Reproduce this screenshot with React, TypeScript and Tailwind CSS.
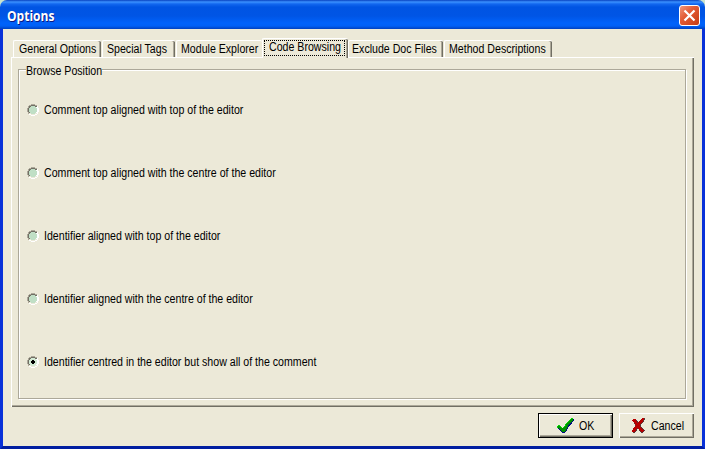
import React from "react";

const raised =
  "shadow-[inset_1px_1px_0_#fff,inset_-1px_-1px_0_#716f64,inset_-2px_-2px_0_#aca899]";

const narrow = "inline-block origin-left scale-x-[0.884] whitespace-nowrap";

function Pixels({ rows, colors }: { rows: string[]; colors: Record<string, string> }) {
  const width = Math.max(...rows.map((r) => r.length));
  return (
    <svg width={width} height={rows.length} shapeRendering="crispEdges" className="block shrink-0">
      {rows.flatMap((row, y) =>
        [...row].map((c, x) =>
          colors[c] ? <rect key={`${x}-${y}`} x={x} y={y} width="1" height="1" fill={colors[c]} /> : null,
        ),
      )}
    </svg>
  );
}

const radioRows = [
  "....gggg....",
  "..ggddddgg..",
  ".gddffffddw.",
  ".gdffffffww.",
  "gdffffffffww",
  "gdffffffffww",
  "gdffffffffww",
  "gdffffffffww",
  ".gdffffffww.",
  ".gllffffllw.",
  "..wwllllww..",
  "....wwww....",
];

const radioCheckedRows = [
  "....gggg....",
  "..ggddddgg..",
  ".gddffffddw.",
  ".gdffffffww.",
  "gdfffkkfffww",
  "gdffkkkkffww",
  "gdffkkkkffww",
  "gdfffkkfffww",
  ".gdffffffww.",
  ".gllffffllw.",
  "..wwllllww..",
  "....wwww....",
];

const checkRows = [
  "..............bb.",
  ".............bggn",
  "............bgggn",
  "...........bgggn.",
  "..........bgggn..",
  ".........bgggnn..",
  "........bgggnn...",
  ".bb.....bggnn....",
  "bggb...bgggn.....",
  "bgggb.bgggn......",
  ".nggggggggn......",
  "..nggggggn.......",
  "...ngggggn.......",
  "....ngggn........",
  ".....nnn.........",
];

const crossRows = [
  "..........rrs",
  ".rrr.....rrrs",
  "rrrrs...rrrs.",
  ".rrrrs.rrrrs.",
  "..rrrsrrrrs..",
  "..srrrrrrs...",
  "...rrrrrs....",
  "...srrrrs....",
  "...rrrrrs....",
  "..rrrrrrrs...",
  ".rrrrsrrrrs..",
  ".rrrs..rrrrs.",
  "rrrrs..srrrrs",
  "rrrs....srrs.",
  ".ss......ss..",
];

const edge = "shadow-[inset_-1px_0_0_#716f64,inset_-2px_0_0_#aca899]";

const tabs = [
  { label: "General Options", box: `w-[88px] pl-[5px] ${edge}` },
  { label: "Special Tags", box: `w-[73px] ml-px pl-[4px] ${edge}` },
  { label: "Module Explorer", box: "w-[86px] ml-px pl-[4px]" },
  { label: "Code Browsing", active: true, box: `w-[86px] pl-[6px] ${edge}` },
  { label: "Exclude Doc Files", box: `w-[95px] pl-[3px] ${edge}` },
  { label: "Method Descriptions", box: `w-[108px] ml-px pl-[4px] ${edge}` },
];

const options = [
  { label: "Comment top aligned with top of the editor" },
  { label: "Comment top aligned with the centre of the editor" },
  { label: "Identifier aligned with top of the editor" },
  { label: "Identifier aligned with the centre of the editor" },
  { label: "Identifier centred in the editor but show all of the comment", checked: true },
];

export default function App() {
  return (
    <div className="flex h-[449px] w-[705px] flex-col overflow-hidden bg-[#c9e3cd] font-['Liberation_Sans',Arial,sans-serif] text-[12px] leading-[14px] text-black">
      <header className="flex h-[29px] shrink-0 items-start justify-between rounded-t-[7px] bg-[linear-gradient(180deg,#0842c0_0px,#3b91ff_2px,#1267ef_4px,#0054e3_7px,#0055e5_16px,#0062fb_23px,#0060f6_26px,#0040bf_29px)] pt-[5px] pr-[5px] pl-[7px]">
        <h1 className="origin-left scale-x-[0.86] pt-[3px] font-['Open_Sans',sans-serif] text-[14px] leading-[16px] font-bold text-white [text-shadow:1px_1px_0_#0a1883]">
          Options
        </h1>
        <button aria-label="Close" className="flex h-[21px] w-[21px] items-center justify-center rounded-[3px] border border-white bg-[linear-gradient(135deg,#ef967c,#e35c36_40%,#c63c12)]">
          <svg width="13" height="13" viewBox="0 0 13 13" className="shrink-0">
            <path d="M1.500 1.500l10 10M11.500 1.500l-10 10" stroke="#fff" strokeWidth="2.2" />
          </svg>
        </button>
      </header>
      <main className="flex flex-1 flex-col border-x-[3px] border-b-[3px] border-[#0831d9] border-b-[#001ea0] bg-[#ece9d8] px-[8px]">
        <nav className="z-10 flex h-[28px] shrink-0 items-end pl-[2px]">
          {tabs.map((t) => (
            <div
              key={t.label}
              className={`shrink-0 rounded-t-[2px] border-t border-l border-white bg-[#ece9d8] pt-px ${t.box} ${
                t.active ? "relative -mb-px h-[20px]" : "h-[17px]"
              }`}
            >
              <span className={narrow}>{t.label}</span>
              {t.active && <span className="absolute top-[1px] left-[1px] h-[16px] w-[81px] border border-dotted border-black" />}
            </div>
          ))}
        </nav>
        <section className={`h-[350px] w-[683px] shrink-0 pt-[12px] pl-[7px] ${raised}`}>
          <div className="h-[330px] w-[668px] border border-[#aca899] pl-[7px] shadow-[1px_1px_0_#fff,inset_1px_1px_0_#fff]">
            <div className="-mt-[6px] h-[14px] w-[76px] bg-[#ece9d8]">
              <span className={narrow}>Browse Position</span>
            </div>
            <div className="flex flex-col gap-[49px] pt-[25px] pl-px">
              {options.map((o) => (
                <label key={o.label} className="flex h-[14px] items-center gap-[5px]">
                  <Pixels
                    rows={o.checked ? radioCheckedRows : radioRows}
                    colors={{ g: "#aca899", d: "#716f64", f: o.checked ? "#d3ead4" : "#c0dfc5", l: "#ece9d8", w: "#fff", k: "#000" }}
                  />
                  <span className={narrow}>{o.label}</span>
                </label>
              ))}
            </div>
          </div>
        </section>
        <footer className="flex justify-end gap-[6px] pt-[6px]">
          <button className={`h-[25px] w-[75px] border border-black ${raised}`}>
            <span className="flex items-center pl-[18px]">
              <Pixels rows={checkRows} colors={{ b: "#00d800", g: "#009000", n: "#000c80" }} />
              <span className={`ml-[5px] ${narrow}`}>OK</span>
            </span>
          </button>
          <button className={`h-[25px] w-[75px] ${raised}`}>
            <span className="flex items-center pl-[13px]">
              <Pixels rows={crossRows} colors={{ r: "#b80000", s: "#58383a" }} />
              <span className={`ml-[6px] ${narrow}`}>Cancel</span>
            </span>
          </button>
        </footer>
      </main>
    </div>
  );
}
